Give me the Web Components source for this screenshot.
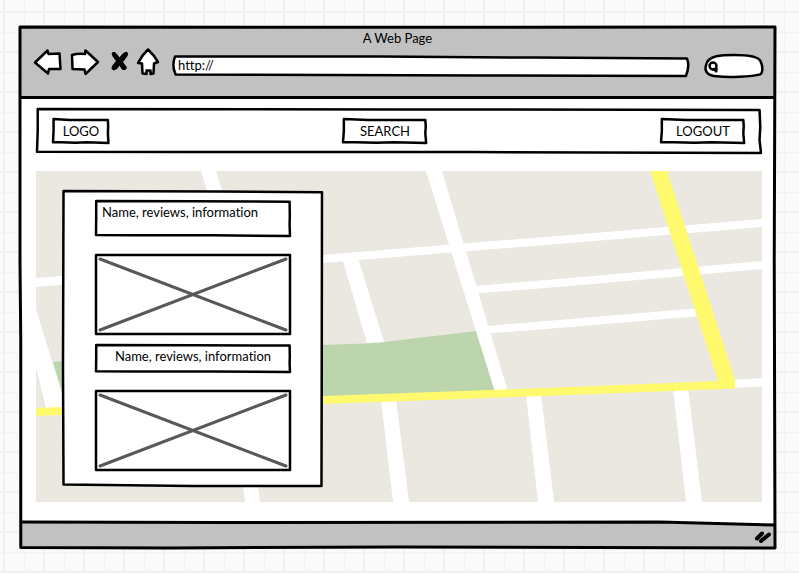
<!DOCTYPE html>
<html lang="en">
<head>
<meta charset="utf-8">
<title>A Web Page</title>
<style>
  body {
    margin: 0;
    min-height: 100vh;
    box-sizing: border-box;
    padding: 27px 24px 25px 20px;
    display: flex;
    flex-direction: column;
    color: #000;
    font: 13px/16px Lato, "Liberation Sans", sans-serif;
    font-variant-ligatures: none;
    background:
      repeating-linear-gradient(90deg, transparent 0 3px, #f1f1f1 3px 5px, transparent 5px 24px, #f3f3f3 24px 25px, transparent 25px 40px),
      repeating-linear-gradient(180deg, transparent 0 11px, #f1f1f1 11px 13px, transparent 13px 32px, #f3f3f3 32px 33px, transparent 33px 40px),
      #fafafa;
  }
  browser-window { flex: 1; }
</style>
</head>
<body>
<browser-window>
  <browser-toolbar slot="header" heading="A Web Page" address="http://"></browser-toolbar>
  <site-nav>
    <sketch-button>LOGO</sketch-button>
    <sketch-button wide>SEARCH</sketch-button>
    <sketch-button wide>LOGOUT</sketch-button>
  </site-nav>
  <map-view>
    <results-panel>
      <place-card tall>Name, reviews, information</place-card>
      <place-card>Name, reviews, information</place-card>
    </results-panel>
  </map-view>
</browser-window>

<script>
const define = (name, html, setup) => customElements.define(name, class extends HTMLElement {
  constructor() {
    super();
    const template = document.createElement('template');
    template.innerHTML = html;
    this.attachShadow({ mode: 'open' }).append(template.content.cloneNode(true));
  }
  connectedCallback() { if (setup) setup(this, this.shadowRoot); }
});

/* Hand-drawn outline that stretches over the box it decorates. */
const outlines = {
  frame: 'M0 0 L40 .05 L100 0 L99.9 45 L100 100 L50 99.8 L20 100 L.1 99.9 L.1 60 L0 45 Z',
  bar: 'M.1 0 L50 1 L99.8 2 L99.9 40 L99.8 70 L100 100 L60 98 L20 98 L0 97 L.1 50 Z',
  chip: 'M1 0 L30 4 L98 4 L98.5 30 L98 60 L99 100 L60 97 L40 99 L15 97 L0 97 L1 50 Z',
  panel: 'M.2 0 L60 .2 L100 .4 L99.9 60 L99.8 100 L50 100 L.2 99.5 L0 60 Z',
  plain: 'M0 0 L100 0 L100 100 L0 100 Z',
  field: 'M.4 2 L40 2 L70 8 L99.6 12 Q100.2 50 99.4 100 L60 97 L.5 92 Q-.3 50 .4 2 Z',
  oval: 'M2 45 C5 0 30 0 50 0 C80 0 94 12 96 30 C99 45 101 80 95 88 C80 100 40 102 20 97 C5 94 -2 75 2 45 Z'
};
define('sketch-outline', `
  <style>
    :host { position: absolute; inset: 0; pointer-events: none; }
    svg { display: block; width: 100%; height: 100%; overflow: visible; }
    path { fill: var(--sketch-fill, none); stroke: #000; stroke-width: var(--sketch-line, 2.5); stroke-linejoin: round; vector-effect: non-scaling-stroke; }
  </style>
  <svg viewBox="0 0 100 100" preserveAspectRatio="none" aria-hidden="true"><path/></svg>`,
  (el, root) => root.querySelector('path').setAttribute('d', outlines[el.getAttribute('shape')] || outlines.plain));

define('browser-window', `
  <style>
    :host { display: flex; flex-direction: column; position: relative; background: #fff; }
    main { flex: 1; display: flex; flex-direction: column; gap: 18px; padding: 10px 13px 20px 16px; }
    footer { position: relative; height: 26px; display: flex; justify-content: flex-end; align-items: center; padding-right: 3px; }
    .bar { position: absolute; inset: 0; width: 100%; height: 100%; overflow: visible; }
    .bar .line { fill: none; stroke: #000; stroke-width: 3px; vector-effect: non-scaling-stroke; }
    .grip { position: relative; padding-top: 3px; }
    .edge { --sketch-line: 3; }
  </style>
  <slot name="header"></slot>
  <main><slot></slot></main>
  <footer>
    <svg class="bar" viewBox="0 0 755 26" preserveAspectRatio="none" aria-hidden="true">
      <path fill="#c1c1c1" d="M0 0H640L755 3V26H0Z"/>
      <path class="line" d="M0 0L200 .6L640 0L755 3"/>
    </svg>
    <svg class="grip" width="18" height="13" viewBox="0 0 18 13" aria-hidden="true">
      <g stroke="#000" stroke-width="4" stroke-linecap="round"><path d="M3 8.500L8 3.500M7 11L15 4.500"/></g>
    </svg>
  </footer>
  <sketch-outline class="edge" shape="frame"></sketch-outline>`);

define('browser-toolbar', `
  <style>
    :host { display: block; height: 72px; position: relative; background: #c1c1c1; border-bottom: 3px solid #000; box-sizing: border-box; }
    h1 { margin: 0; font: inherit; font-variant-ligatures: none; line-height: 22px; text-align: center; }
    .row { display: flex; align-items: flex-start; height: 34px; padding: 0 12px 0 14px; }
    nav { display: flex; gap: 9px; }
    button { all: unset; display: block; cursor: pointer; }
    button svg { display: block; fill: #fff; stroke: #000; stroke-width: 2.500px; stroke-linejoin: round; overflow: visible; }
    .field { position: relative; align-self: center; box-sizing: border-box; }
    .address { flex: 1; margin: 0 16px 0 12px; height: 20px; }
    .find { width: 58px; height: 22px; display: flex; align-items: center; }
    sketch-outline { --sketch-fill: #fff; }
    input { position: relative; display: block; width: 100%; height: 100%; min-width: 0; box-sizing: border-box; border: 0; outline: 0; padding: 0 5px 2px; background: none; font: inherit; font-variant-ligatures: none; color: inherit; appearance: none; }
    .find input { padding: 0 8px 0 2px; }
    .find button { position: relative; padding: 2px 0 0 3px; }
  </style>
  <h1></h1>
  <div class="row">
    <nav aria-label="Browser">
      <button aria-label="Back"><svg width="28" height="26"><path d="M1 13.500L13.500 1.500L14.500 5L25.500 4.500L26.500 20L15 20L14 24.500Z"/></svg></button>
      <button aria-label="Forward"><svg width="28" height="26"><path d="M1 6Q7 4 14 5L14.500 1.500L27 13L14.500 25L13.500 20.500L1.500 20Z"/></svg></button>
      <button aria-label="Stop"><svg width="20" height="26"><path style="fill:#000;stroke-width:1px" d="M4 4Q6 2.500 8 4.500L11.500 9Q15 3.500 18.500 3Q20.500 4 19 7L14.500 13L18.500 18.500Q18 21.500 14.500 20.500L11.500 16Q9 21 5.500 21Q3 20 4.500 17L8.500 12Q4 7 4 4Z"/></svg></button>
      <button aria-label="Home"><svg width="24" height="26"><path d="M11 .5Q17 6 21 13L17 14.500L16.500 24.500L13.500 25V21.500H9.500V25L5.500 24.500L5 14.500L1 14Q5 6 11 .5Z"/></svg></button>
    </nav>
    <div class="field address"><sketch-outline shape="field"></sketch-outline><input type="text" aria-label="Address"></div>
    <div class="field find">
      <sketch-outline shape="oval"></sketch-outline>
      <button aria-label="Search"><svg width="11" height="12"><circle cx="5" cy="5" r="3.500"/><path d="M4.500 8.500H8.500V7M7 9L9 11"/></svg></button>
      <input type="search" aria-label="Search the web">
    </div>
  </div>`,
  (el, root) => {
    root.querySelector('h1').textContent = el.getAttribute('heading');
    root.querySelector('.address input').value = el.getAttribute('address');
  });

define('site-nav', `
  <style>
    :host { display: block; position: relative; margin: 0 1px; }
    nav { display: flex; justify-content: space-between; padding: 10px 16px; position: relative; }
  </style>
  <sketch-outline shape="bar"></sketch-outline>
  <nav aria-label="Site"><slot></slot></nav>`);

define('sketch-button', `
  <style>
    :host { display: block; }
    button { all: unset; position: relative; display: block; box-sizing: border-box; min-width: 56px; height: 24px; padding: 0 8px; text-align: center; line-height: 22px; cursor: pointer; }
    :host([wide]) button { min-width: 84px; }
  </style>
  <button><sketch-outline shape="chip"></sketch-outline><slot></slot></button>`);

define('map-view', `
  <style>
    :host { flex: 1; display: block; position: relative; padding: 20px 27px 16px; background: #ebe8e1; }
    svg { position: absolute; inset: 0; width: 100%; height: 100%; }
    .park { fill: #bcd5ad; }
    .road { fill: #fff; }
    .main { fill: #fff96e; }
  </style>
  <svg viewBox="36 171 726 331" preserveAspectRatio="none" role="img" aria-label="Street map">
    <path class="park" d="M322 345L366 343.500L384 342L476 331L496 392L322 399ZM53 362L64 361V398Z"/>
    <path class="road" d="M36 278L340 253.500L570 235L762 219V227L570 243L340 261.500L36 287Z
      M201 171H216L290 410H272Z M426 171H442L508 392H495Z M342 258H358L384 342L367 343Z
      M476 286L570 278L762 261V269L570 286L476 293.500Z M488 326L570 319L700 308V316L570 327L488 333.500Z
      M36 309L62 394V408H46L36 367Z M232 400H247L260 502H245Z M381 400H396L409 502H393Z
      M526 394H541L554 502H538Z M673 388H688L702 502H686Z M730 380L762 378V386.500L730 388Z"/>
    <path class="main" d="M36 408L323 396L570 387L718 381L650 171H667L735 380V388.500L570 395L323 404L36 416Z"/>
  </svg>
  <slot></slot>`);

define('results-panel', `
  <style>
    :host { display: flex; flex-direction: column; gap: 11px; position: relative; width: 259px; box-sizing: border-box; padding: 10px 32px 16px 33px; background: #fff; }
  </style>
  <sketch-outline shape="panel"></sketch-outline>
  <slot></slot>`);

define('place-card', `
  <style>
    :host { display: flex; flex-direction: column; gap: 19px; position: relative; }
    .label { position: relative; height: 27px; line-height: 22px; text-align: center; }
    :host([tall]) .label { height: 35px; padding-left: 6px; text-align: left; }
    .photo { position: relative; height: 79px; }
    .photo svg { position: absolute; inset: 4px; width: calc(100% - 8px); height: calc(100% - 8px); overflow: visible; stroke: #58585a; stroke-width: 3px; stroke-linecap: round; }
    .photo line { vector-effect: non-scaling-stroke; }
  </style>
  <div class="label"><sketch-outline shape="bar"></sketch-outline><slot></slot></div>
  <div class="photo">
    <sketch-outline shape="plain"></sketch-outline>
    <svg viewBox="0 0 100 100" preserveAspectRatio="none" role="img" aria-label="Photo placeholder"><line x1="0" y1="0" x2="100" y2="100"/><line x1="0" y1="100" x2="100" y2="0"/></svg>
  </div>`);
</script>
</body>
</html>
